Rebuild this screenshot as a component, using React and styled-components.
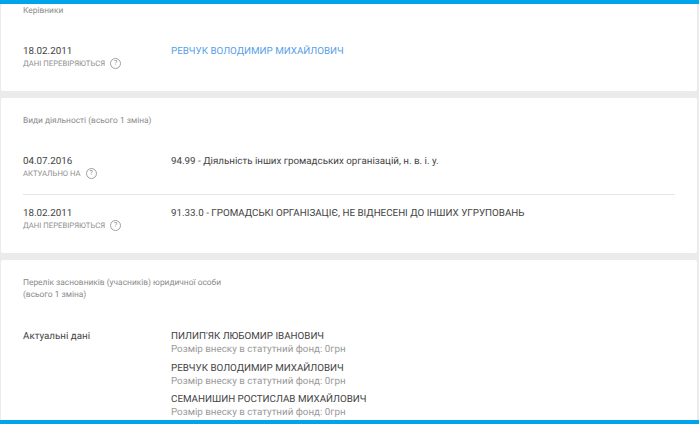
import React from 'react';
import styled, { createGlobalStyle } from 'styled-components';

const GlobalStyle = createGlobalStyle`
  html, body {
    margin: 0;
    padding: 0;
    background: #ebebeb;
  }
  * {
    box-sizing: border-box;
  }
`;

const Page = styled.div`
  width: 699px;
  height: 424px;
  display: flex;
  flex-direction: column;
  overflow: hidden;
  font-family: Roboto, "Liberation Sans", sans-serif;
  text-rendering: geometricPrecision;
  background: #ebebeb;
`;

const BlueBar = styled.div`
  flex: none;
  height: 4px;
  background: #00a4ea;
`;

const Content = styled.div`
  flex: 1;
  min-height: 0;
  overflow: hidden;
  padding: 0 2px 0 1px;
  display: flex;
  flex-direction: column;
  gap: 7px;
`;

const Card = styled.section`
  flex: none;
  background: #fff;
  border-radius: 2px;
  padding: ${(p) => p.$padding};
  height: ${(p) => p.$height};
`;

const CardTitle = styled.h3`
  margin: 0;
  font-size: 8.4px;
  line-height: 12px;
  font-weight: 400;
  color: #8a8a8a;
  margin-bottom: ${(p) => p.$gap};
`;

const Row = styled.div`
  display: grid;
  grid-template-columns: 148px 1fr;
  padding-bottom: ${(p) => p.$bottom || '0'};
  border-bottom: ${(p) => (p.$divided ? '1px solid #e6e6e6' : 'none')};
  margin-bottom: ${(p) => p.$after || '0'};
`;

const DateText = styled.div`
  font-size: 9.8px;
  line-height: 13px;
  color: #444;
`;

const Status = styled.div`
  display: flex;
  align-items: center;
  gap: 5px;
  height: 13px;
  margin-top: -1px;
  font-size: 7.7px;
  color: #8f8f8f;
`;

const Help = styled.span`
  width: 11px;
  height: 11px;
  border: 1px solid #a0a0a0;
  border-radius: 50%;
  display: inline-flex;
  align-items: center;
  justify-content: center;
  font-size: 7px;
  line-height: 1;
  color: #8a8a8a;
`;

const Value = styled.div`
  font-size: 9.8px;
  line-height: 13px;
  color: ${(p) => (p.$link ? '#5a9fe6' : '#444')};
`;

const Person = styled.div`
  margin-bottom: 5.5px;
`;

const PersonName = styled.div`
  font-size: 9.8px;
  line-height: 13px;
  color: #444;
`;

const PersonNote = styled.div`
  font-size: 9.8px;
  line-height: 13px;
  color: #9a9a9a;
`;

const people = [
  "ПИЛИП'ЯК ЛЮБОМИР ІВАНОВИЧ",
  'РЕВЧУК ВОЛОДИМИР МИХАЙЛОВИЧ',
  'СЕМАНИШИН РОСТИСЛАВ МИХАЙЛОВИЧ',
];

const StatusLine = ({ children }) => (
  <Status>
    {children}
    <Help>?</Help>
  </Status>
);

const App = () => (
  <Page>
    <GlobalStyle />
    <BlueBar />
    <Content>
      <Card $height="87px" $padding="1px 22px 0">
        <CardTitle $gap="28px">Керівники</CardTitle>
        <Row>
          <div>
            <DateText>18.02.2011</DateText>
            <StatusLine>ДАНІ ПЕРЕВІРЯЮТЬСЯ</StatusLine>
          </div>
          <Value $link>РЕВЧУК ВОЛОДИМИР МИХАЙЛОВИЧ</Value>
        </Row>
      </Card>
      <Card $height="155px" $padding="17px 22px 0">
        <CardTitle $gap="28px">Види діяльності (всього 1 зміна)</CardTitle>
        <Row $divided $bottom="14px" $after="12px">
          <div>
            <DateText>04.07.2016</DateText>
            <StatusLine>АКТУАЛЬНО НА</StatusLine>
          </div>
          <Value>94.99 - Діяльність інших громадських організацій, н. в. і. у.</Value>
        </Row>
        <Row>
          <div>
            <DateText>18.02.2011</DateText>
            <StatusLine>ДАНІ ПЕРЕВІРЯЮТЬСЯ</StatusLine>
          </div>
          <Value>91.33.0 - ГРОМАДСЬКІ ОРГАНІЗАЦІЄ, НЕ ВІДНЕСЕНІ ДО ІНШИХ УГРУПОВАНЬ</Value>
        </Row>
      </Card>
      <Card $height="200px" $padding="17px 22px 0">
        <CardTitle $gap="29px">
          Перелік засновників (учасників) юридичної особи
          <br />
          (всього 1 зміна)
        </CardTitle>
        <Row>
          <DateText>Актуальні дані</DateText>
          <div>
            {people.map((name) => (
              <Person key={name}>
                <PersonName>{name}</PersonName>
                <PersonNote>Розмір внеску в статутний фонд: 0грн</PersonNote>
              </Person>
            ))}
          </div>
        </Row>
      </Card>
    </Content>
    <BlueBar />
  </Page>
);

export default App;
